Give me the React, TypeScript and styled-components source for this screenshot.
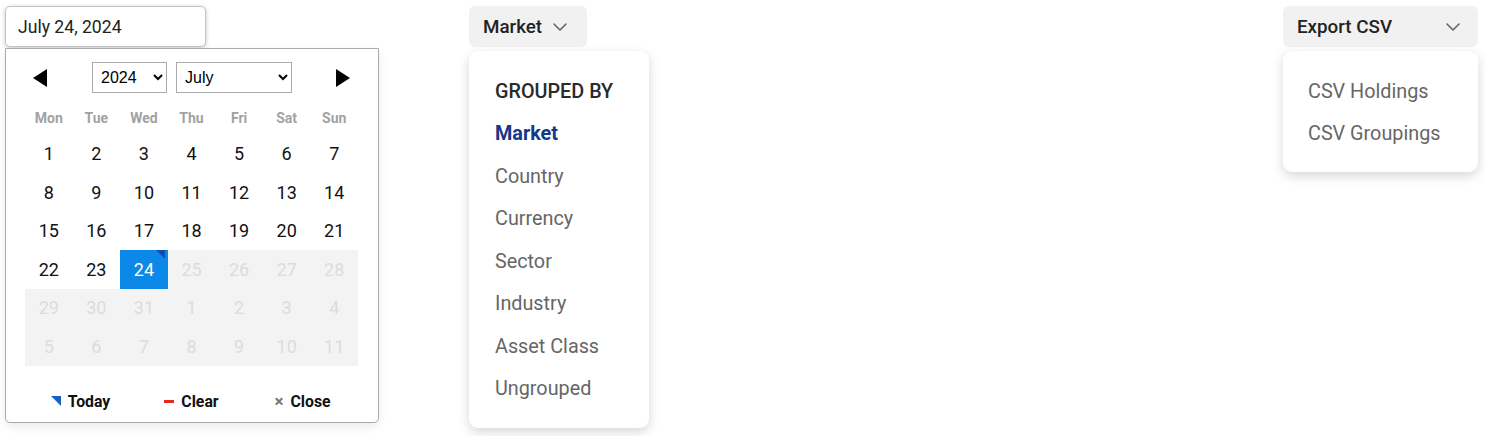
import React from "react";
import styled, { createGlobalStyle } from "styled-components";

const Global = createGlobalStyle`
  html, body { margin: 0; padding: 0; background: #fff; }
  body { font-family: Roboto, "Liberation Sans", Arial, sans-serif; }
  * { box-sizing: border-box; }
`;

const Bar = styled.div`
  display: flex;
  align-items: flex-start;
  padding: 6px 7px 0 5px;
  height: 436px;
`;

const PickerWrap = styled.div`
  position: relative;
  width: 201px;
`;

const DateInput = styled.div`
  height: 41px;
  border: 1px solid #c4c4c4;
  border-radius: 5px;
  box-shadow: 0 1px 4px rgba(0, 0, 0, 0.22);
  display: flex;
  align-items: center;
  padding-left: 12px;
  font-size: 17.6px;
  color: #222;
  background: #fff;
`;

const Calendar = styled.div`
  position: absolute;
  top: 42px;
  left: 0;
  width: 374px;
  height: 375px;
  background: #fff;
  border: 1px solid #aaa;
  border-radius: 0 0 5px 5px;
  box-shadow: 0 4px 10px rgba(0, 0, 0, 0.08);
  padding: 13px 20px 0 19px;
  z-index: 2;
`;

const Header = styled.div`
  display: flex;
  align-items: center;
  height: 31px;
`;

const NavArrow = styled.button<{ $dir: "prev" | "next" }>`
  border: none;
  background: none;
  padding: 0;
  width: 14px;
  height: 18px;
  display: flex;
  margin-left: ${(p) => (p.$dir === "prev" ? "8px" : "auto")};
  margin-right: ${(p) => (p.$dir === "prev" ? "45px" : "8px")};
  cursor: pointer;
`;

const Select = styled.select<{ $w: number }>`
  width: ${(p) => p.$w}px;
  height: 31px;
  border: 1px solid #aaa;
  border-radius: 0;
  background: #fff;
  font-family: "Liberation Sans", Arial, sans-serif;
  font-size: 16px;
  color: #000;
  padding: 0 4px;
  margin-right: 9px;
`;

const DayNames = styled.div`
  display: grid;
  grid-template-columns: repeat(7, 1fr);
  width: 333px;
  margin-top: 10px;
  height: 30px;
  align-items: center;
`;

const DayName = styled.div`
  text-align: center;
  font-size: 14px;
  font-weight: 700;
  color: #a2a2a2;
`;

const Grid = styled.div`
  display: grid;
  grid-template-columns: repeat(7, 1fr);
  grid-auto-rows: 38.5px;
  width: 333px;
  margin-top: 1.5px;
`;

const Cell = styled.div<{ $kind: "normal" | "selected" | "disabled" }>`
  position: relative;
  display: flex;
  align-items: center;
  justify-content: center;
  font-size: 18px;
  color: ${(p) =>
    p.$kind === "selected" ? "#fff" : p.$kind === "disabled" ? "#dcdcdc" : "#111"};
  background: ${(p) =>
    p.$kind === "selected" ? "#0c88e9" : p.$kind === "disabled" ? "#f3f3f3" : "transparent"};
`;

const Corner = styled.span`
  position: absolute;
  top: 0;
  right: 3px;
  width: 0;
  height: 0;
  border-top: 9px solid #0b4fb0;
  border-left: 9px solid transparent;
`;

const Footer = styled.div`
  display: grid;
  grid-template-columns: repeat(3, 1fr);
  width: 333px;
  margin-top: 25px;
  height: 22px;
`;

const FooterBtn = styled.div`
  display: flex;
  align-items: center;
  justify-content: center;
  gap: 7px;
  font-size: 15.8px;
  font-weight: 700;
  color: #111;
`;

const TodayIcon = styled.span`
  width: 0;
  height: 0;
  border-top: 10px solid #1560c9;
  border-left: 10px solid transparent;
  margin-top: -2px;
`;

const ClearIcon = styled.span`
  width: 10px;
  height: 3px;
  background: #e8261b;
`;

const CloseIcon = styled.span`
  font-size: 17px;
  color: #777;
  font-weight: 700;
  line-height: 1;
`;

const MenuWrap = styled.div<{ $ml: string }>`
  position: relative;
  margin-left: ${(p) => p.$ml};
`;

const MenuButton = styled.button<{ $w: number; $pr: number }>`
  width: ${(p) => p.$w}px;
  height: 41px;
  border: none;
  border-radius: 6px;
  background: #f1f1f1;
  display: flex;
  align-items: center;
  justify-content: space-between;
  padding: 0 ${(p) => p.$pr}px 0 14px;
  font-family: Roboto, "Liberation Sans", Arial, sans-serif;
  font-size: 18.8px;
  font-weight: 500;
  color: #222;
`;

const Menu = styled.div<{ $w: number; $pt: number; $pb: number }>`
  position: absolute;
  top: 45px;
  left: 0;
  width: ${(p) => p.$w}px;
  background: #fff;
  border-radius: 9px;
  box-shadow: 0 4px 12px rgba(0, 0, 0, 0.16);
  padding: ${(p) => p.$pt}px 0 ${(p) => p.$pb}px;
`;

const MenuItem = styled.div<{ $kind?: "heading" | "active" | "normal"; $pl: number }>`
  height: 42.5px;
  display: flex;
  align-items: center;
  padding-left: ${(p) => p.$pl}px;
  font-size: 19.8px;
  font-weight: ${(p) => (p.$kind === "heading" ? 500 : p.$kind === "active" ? 700 : 400)};
  color: ${(p) =>
    p.$kind === "heading" ? "#2a2a2a" : p.$kind === "active" ? "#16378a" : "#666"};
`;

const Chevron = () => (
  <svg width="14" height="8" viewBox="0 0 14 8" fill="none">
    <path d="M1 1l6 6 6-6" stroke="#666" strokeWidth="1.6" strokeLinecap="round" strokeLinejoin="round" />
  </svg>
);

const Tri = ({ dir }: { dir: "prev" | "next" }) => (
  <svg width="14" height="18" viewBox="0 0 14 18">
    <path d={dir === "prev" ? "M14 0L0 9l14 9z" : "M0 0l14 9L0 18z"} fill="#000" />
  </svg>
);

const days: { n: number; kind: "normal" | "selected" | "disabled" }[] = [];
for (let i = 1; i <= 31; i++) days.push({ n: i, kind: i < 24 ? "normal" : i === 24 ? "selected" : "disabled" });
for (let i = 1; i <= 11; i++) days.push({ n: i, kind: "disabled" });

const months = ["January", "February", "March", "April", "May", "June", "July", "August", "September", "October", "November", "December"];

export default function App() {
  return (
    <>
      <Global />
      <Bar>
        <PickerWrap>
          <DateInput>July 24, 2024</DateInput>
          <Calendar>
            <Header>
              <NavArrow $dir="prev" aria-label="Previous month"><Tri dir="prev" /></NavArrow>
              <Select $w={75} defaultValue="2024">
                {[2022, 2023, 2024, 2025].map((y) => (
                  <option key={y} value={y}>{y}</option>
                ))}
              </Select>
              <Select $w={116} defaultValue="July">
                {months.map((m) => (
                  <option key={m} value={m}>{m}</option>
                ))}
              </Select>
              <NavArrow $dir="next" aria-label="Next month"><Tri dir="next" /></NavArrow>
            </Header>
            <DayNames>
              {["Mon", "Tue", "Wed", "Thu", "Fri", "Sat", "Sun"].map((d) => (
                <DayName key={d}>{d}</DayName>
              ))}
            </DayNames>
            <Grid>
              {days.map((d, i) => (
                <Cell key={i} $kind={d.kind}>
                  {d.n}
                  {d.kind === "selected" && <Corner />}
                </Cell>
              ))}
            </Grid>
            <Footer>
              <FooterBtn><TodayIcon />Today</FooterBtn>
              <FooterBtn><ClearIcon />Clear</FooterBtn>
              <FooterBtn><CloseIcon>×</CloseIcon>Close</FooterBtn>
            </Footer>
          </Calendar>
        </PickerWrap>

        <MenuWrap $ml="263px">
          <MenuButton $w={118} $pr={20}>Market <Chevron /></MenuButton>
          <Menu $w={180} $pt={19} $pb={18}>
            <MenuItem $kind="heading" $pl={26}>GROUPED BY</MenuItem>
            <MenuItem $kind="active" $pl={26}>Market</MenuItem>
            {["Country", "Currency", "Sector", "Industry", "Asset Class", "Ungrouped"].map((t) => (
              <MenuItem key={t} $pl={26}>{t}</MenuItem>
            ))}
          </Menu>
        </MenuWrap>

        <MenuWrap $ml="auto">
          <MenuButton $w={195} $pr={18}>Export CSV <Chevron /></MenuButton>
          <Menu $w={195} $pt={19} $pb={17}>
            <MenuItem $pl={25}>CSV Holdings</MenuItem>
            <MenuItem $pl={25}>CSV Groupings</MenuItem>
          </Menu>
        </MenuWrap>
      </Bar>
    </>
  );
}
